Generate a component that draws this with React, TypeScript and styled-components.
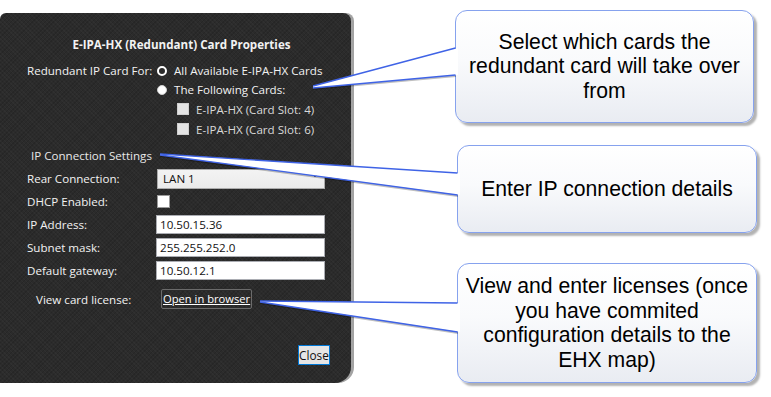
import React from "react";
import styled, { createGlobalStyle } from "styled-components";

const Global = createGlobalStyle`
  html, body { margin: 0; padding: 0; background: #ffffff; }
  body { width: 771px; height: 397px; overflow: hidden; }
`;

const Page = styled.div`
  position: relative;
  width: 771px;
  height: 397px;
  display: flex;
  align-items: flex-start;
  background: #ffffff;
`;

const Dialog = styled.div`
  margin-top: 13px;
  width: 351px;
  height: 370px;
  box-sizing: border-box;
  padding: 24px 21px 18px 27px;
  display: flex;
  flex-direction: column;
  background-color: #2b2b2b;
  background-image: repeating-linear-gradient(45deg, rgba(255,255,255,0.025) 0 1px, transparent 1px 3px),
    repeating-linear-gradient(-45deg, rgba(0,0,0,0.12) 0 1px, transparent 1px 3px);
  border-radius: 6px 8px 16px 0;
  box-shadow: 3px 0 0 #a3a3a3;
  font-family: "Open Sans", "Noto Sans", sans-serif;
  font-size: 11.6px;
  color: #f2f2f2;
`;

const Title = styled.div`
  text-align: center;
  font-weight: 700;
  font-size: 11.6px;
  line-height: 16px;
  margin-right: -6px;
  margin-bottom: 8px;
`;

const OptionGrid = styled.div`
  display: grid;
  grid-template-columns: 130px 1fr;
`;

const Label = styled.div`
  line-height: 19px;
  height: 19px;
  white-space: nowrap;
`;

const Options = styled.div`
  display: flex;
  flex-direction: column;
`;

const OptionRow = styled.div<{ $indent?: number; $h?: number; $dim?: boolean }>`
  display: flex;
  align-items: center;
  gap: 7px;
  height: ${(p) => p.$h ?? 19}px;
  padding-left: ${(p) => p.$indent ?? 0}px;
  color: ${(p) => (p.$dim ? "#d9d9d9" : "#f2f2f2")};
  white-space: nowrap;
`;

const Radio = styled.span<{ $filled?: boolean }>`
  width: 10px;
  height: 10px;
  box-sizing: border-box;
  border-radius: 50%;
  background: ${(p) => (p.$filled ? "#ffffff" : "#2b2b2b")};
  border: ${(p) => (p.$filled ? "1px solid #d0d0d0" : "2.5px solid #ffffff")};
  flex: none;
`;

const DisabledBox = styled.span`
  width: 12px;
  height: 12px;
  box-sizing: border-box;
  background: #e4e4e4;
  border: 1px solid #cfcfcf;
  flex: none;
`;

const SectionHeading = styled.div`
  margin-top: 9px;
  padding-left: 4px;
  line-height: 16px;
  color: #e8e8e8;
`;

const FieldGrid = styled.div`
  margin-top: 5px;
  display: grid;
  grid-template-columns: 129px 169px;
  grid-auto-rows: 19px;
  row-gap: 4px;
  align-items: center;
  & > :first-child, & > :nth-child(2) { height: 20px; }
`;

const FieldLabel = styled.div`
  line-height: 19px;
  white-space: nowrap;
`;

const Select = styled.div`
  margin-left: 1px;
  height: 20px;
  box-sizing: border-box;
  border: 1px solid #acacac;
  background: linear-gradient(#f3f3f3, #ebebeb);
  color: #111;
  padding: 0 5px 0 5px;
  line-height: 18px;
  display: flex;
  align-items: center;
  justify-content: space-between;
`;

const Check = styled.span`
  display: block;
  width: 13px;
  height: 13px;
  box-sizing: border-box;
  background: #ffffff;
  border: 1px solid #9a9a9a;
  margin-left: 1px;
`;

const TextInput = styled.div`
  height: 19px;
  box-sizing: border-box;
  background: #ffffff;
  border: 1px solid #abadb3;
  color: #111;
  padding-left: 3px;
  line-height: 17px;
`;

const LicenseRow = styled.div`
  margin-top: 9px;
  display: flex;
  align-items: center;
  height: 20px;
`;

const LicenseLabel = styled.div`
  width: 125px;
  padding-left: 9px;
  box-sizing: border-box;
`;

const LinkButton = styled.button`
  margin-left: 9px;
  height: 20px;
  padding: 0 1px;
  background: transparent;
  border: 1px solid #6b6b6b;
  border-radius: 2px;
  color: #ffffff;
  text-decoration: underline;
  font-family: inherit;
  font-size: 11.2px;
  line-height: 16px;
`;

const CloseButton = styled.button`
  margin-top: auto;
  align-self: flex-end;
  width: 32px;
  height: 20px;
  padding: 0;
  background: #e5e5e5;
  border: 1px solid #0078d7;
  color: #111;
  font-family: inherit;
  font-size: 11.8px;
  line-height: 16px;
`;

const Callouts = styled.div`
  display: flex;
  flex-direction: column;
  margin-left: 104px;
`;

const Callout = styled.div<{ $w: number; $h: number; $top: number; $left: number }>`
  width: ${(p) => p.$w}px;
  height: ${(p) => p.$h}px;
  margin-top: ${(p) => p.$top}px;
  margin-left: ${(p) => p.$left}px;
  box-sizing: border-box;
  border: 1.5px solid #86a2ee;
  border-radius: 12px;
  background: linear-gradient(#ffffff 0%, #f9fafc 45%, #e9ecf2 100%);
  box-shadow: 3px 3px 2px rgba(0, 0, 0, 0.3);
  display: flex;
  align-items: center;
  justify-content: center;
  text-align: center;
  font-family: "Liberation Sans", Arial, sans-serif;
  font-size: 21.2px;
  line-height: 24.5px;
  color: #000;
`;

const PointerLayer = styled.svg`
  position: absolute;
  left: 0;
  top: 0;
  width: 771px;
  height: 397px;
  pointer-events: none;
  overflow: visible;
`;

type Wedge = { tip: [number, number]; tip2: [number, number]; a: number; b: number; x: number };

const wedges: Wedge[] = [
  { tip: [313, 86], tip2: [313, 88], a: 48, b: 75, x: 455 },
  { tip: [160, 154], tip2: [160, 155], a: 173, b: 195, x: 457 },
  { tip: [260, 301], tip2: [260, 302], a: 303, b: 332, x: 457 },
];

function Pointers() {
  return (
    <PointerLayer viewBox="0 0 771 397">
      {wedges.map((w, i) => (
        <g key={i}>
          <polygon
            points={`${w.tip[0]},${w.tip[1]} ${w.x + 1},${w.a + 2} ${w.x + 1},${w.b + 2} ${w.tip2[0]},${w.tip2[1] + 2}`}
            fill="rgba(0,0,0,0.25)"
          />
          <polygon
            points={`${w.tip[0]},${w.tip[1]} ${w.x + 3},${w.a} ${w.x + 3},${w.b} ${w.tip2[0]},${w.tip2[1]}`}
            fill="#ffffff"
          />
          <line x1={w.tip[0]} y1={w.tip[1]} x2={w.x + 0.5} y2={w.a} stroke="#3f63e6" strokeWidth={1.3} />
          <line x1={w.tip2[0]} y1={w.tip2[1]} x2={w.x + 0.5} y2={w.b} stroke="#3f63e6" strokeWidth={1.3} />
        </g>
      ))}
    </PointerLayer>
  );
}

function Chevron() {
  return (
    <svg width="8" height="5" viewBox="0 0 8 5" style={{ marginTop: -6 }}>
      <path d="M0.5 0.5 L4 4 L7.5 0.5" fill="none" stroke="#606060" strokeWidth="1" />
    </svg>
  );
}

export default function App() {
  return (
    <Page>
      <Global />
      <Dialog>
        <Title>E-IPA-HX (Redundant) Card Properties</Title>
        <OptionGrid>
          <Label>Redundant IP Card For:</Label>
          <Options>
            <OptionRow>
              <Radio />
              All Available E-IPA-HX Cards
            </OptionRow>
            <OptionRow>
              <Radio $filled />
              The Following Cards:
            </OptionRow>
            <OptionRow $indent={20} $h={20} $dim>
              <DisabledBox />
              E-IPA-HX (Card Slot: 4)
            </OptionRow>
            <OptionRow $indent={20} $h={20} $dim>
              <DisabledBox />
              E-IPA-HX (Card Slot: 6)
            </OptionRow>
          </Options>
        </OptionGrid>
        <SectionHeading>IP Connection Settings</SectionHeading>
        <FieldGrid>
          <FieldLabel>Rear Connection:</FieldLabel>
          <Select>
            LAN 1
            <Chevron />
          </Select>
          <FieldLabel>DHCP Enabled:</FieldLabel>
          <div>
            <Check />
          </div>
          <FieldLabel>IP Address:</FieldLabel>
          <TextInput>10.50.15.36</TextInput>
          <FieldLabel>Subnet mask:</FieldLabel>
          <TextInput>255.255.252.0</TextInput>
          <FieldLabel>Default gateway:</FieldLabel>
          <TextInput>10.50.12.1</TextInput>
        </FieldGrid>
        <LicenseRow>
          <LicenseLabel>View card license:</LicenseLabel>
          <LinkButton>Open in browser</LinkButton>
        </LicenseRow>
        <CloseButton>Close</CloseButton>
      </Dialog>
      <Callouts>
        <Callout $w={299} $h={113} $top={10} $left={0}>
          Select which cards the
          <br />
          redundant card will take over
          <br />
          from
        </Callout>
        <Callout $w={300} $h={88} $top={22} $left={2}>
          Enter IP connection details
        </Callout>
        <Callout $w={300} $h={120} $top={30} $left={2}>
          View and enter licenses (once
          <br />
          you have commited
          <br />
          configuration details to the
          <br />
          EHX map)
        </Callout>
      </Callouts>
      <Pointers />
    </Page>
  );
}
